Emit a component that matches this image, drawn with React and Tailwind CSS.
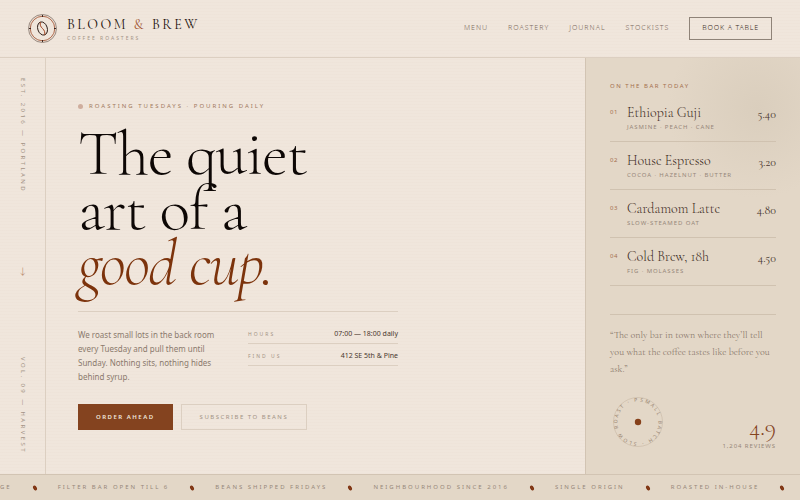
import { clsx } from 'clsx';

const links = ['Menu', 'Roastery', 'Journal', 'Stockists'];

const drinks = [
  { name: 'Ethiopia Guji', notes: 'Jasmine · Peach · Cane', price: '5.40' },
  { name: 'House Espresso', notes: 'Cocoa · Hazelnut · Butter', price: '3.20' },
  { name: 'Cardamom Latte', notes: 'Slow-steamed oat', price: '4.80' },
  { name: 'Cold Brew, 18h', notes: 'Fig · Molasses', price: '4.50' },
];

const details = [
  { label: 'Hours', value: '07:00 — 18:00 daily' },
  { label: 'Find us', value: '412 SE 5th & Pine' },
];

const ticker = [
  'Ge',
  'Filter bar open till 6',
  'Beans shipped Fridays',
  'Neighbourhood since 2016',
  'Single origin',
  'Roasted in-house',
];

const serif = "font-['Cormorant_Garamond','Liberation_Serif',serif]";

const Logo = () => (
  <svg viewBox="0 0 58 58" className="size-[29px] shrink-0" fill="none" aria-hidden="true">
    <circle cx="29" cy="29" r="28" stroke="#5c4a3f" strokeWidth="1.2" />
    <circle cx="29" cy="29" r="24.5" stroke="#a5593a" strokeWidth="1.8" />
    <path d="M29 2v4M29 52v4M2 29h4M52 29h4" stroke="#2a1a14" strokeWidth="1.8" />
    <g transform="rotate(-18 29 29)">
      <ellipse cx="29" cy="29" rx="9.5" ry="13.5" stroke="#2a1a14" strokeWidth="1.8" />
      <path d="M29 15.500c-3 5-2.500 9 0 13.500s3 9 0 13.500" stroke="#a0441f" strokeWidth="1.8" />
    </g>
  </svg>
);

const Bean = () => (
  <svg viewBox="0 0 12 12" className="size-1.5 shrink-0" aria-hidden="true">
    <g transform="rotate(-28 6 6)">
      <ellipse cx="6" cy="6" rx="3.6" ry="5.2" fill="#7c2f0c" />
      <path d="M6 1c-1.2 2.4-.8 3.4 0 5s1.2 2.6 0 5" stroke="#b07a5a" strokeWidth=".5" fill="none" />
    </g>
  </svg>
);

const Stamp = () => (
  <svg viewBox="2 2 56 56" className="size-14 shrink-0" aria-hidden="true">
    <defs>
      <path id="stamp-ring" d="M30 9.5a20.5 20.5 0 1 1-.01 0" />
    </defs>
    <circle cx="30" cy="30" r="24.5" fill="none" stroke="#cbbca9" strokeWidth=".7" />
    <text className="fill-[#97836f] font-['Noto_Sans',sans-serif] text-[5px] tracking-[0.38em]">
      <textPath href="#stamp-ring" startOffset="2">SMALL BATCH · SLOW ROAST · P</textPath>
    </text>
    <circle cx="30" cy="30" r="3.2" fill="#86401a" />
  </svg>
);

export default function App() {
  return (
    <div className="flex min-h-screen flex-col overflow-hidden bg-[#f0e6dc] bg-[repeating-linear-gradient(0deg,transparent_0_2px,#7c330c03_2px_3px)] font-['Noto_Sans',sans-serif] text-[#2a1a14]">
      {/* Header */}
      <header className="flex h-[58px] items-center justify-between border-b border-[#dccfc1] px-7">
        <a href="#home" className="flex items-center gap-2.5">
          <Logo />
          <span className="flex flex-col">
            <span className={clsx(serif, 'text-[14px] leading-4 font-normal tracking-[0.18em] text-[#1a0f0a]')}>
              BLOOM <span className="text-[#a0522d]">&amp;</span> BREW
            </span>
            <span className="mt-0.5 text-[5px] leading-[6px] tracking-[0.4em] text-[#a39385]">COFFEE ROASTERS</span>
          </span>
        </a>
        <nav className="flex items-center gap-5 text-[7px] font-light tracking-[1px] uppercase text-[#7d6b5e]">
          {links.map((link) => (
            <a key={link} href={`#${link.toLowerCase()}`}>{link}</a>
          ))}
          <button type="button" className="h-[23px] border border-[#8f8378] px-3 font-light uppercase tracking-[0.12em] text-[#3b2a22]">
            Book a table
          </button>
        </nav>
      </header>

      <main className="grid flex-1 grid-cols-[46px_1fr_215px]">
        {/* Side rail */}
        <aside className="flex flex-col items-center justify-between border-r border-[#dccfc1] py-5 text-[6px] tracking-[0.4em] text-[#a39385]">
          <span className="[writing-mode:vertical-rl]">EST. 2016 — PORTLAND</span>
          <span className={clsx(serif, 'mb-2 text-[14px] leading-4 tracking-normal text-[#b98d72]')}>↓</span>
          <span className="[writing-mode:vertical-rl]">VOL. 09 — HARVEST</span>
        </aside>

        {/* Hero */}
        <section className="flex flex-col justify-center px-8">
          <p className="flex items-center gap-1.5 text-[6px] leading-2 tracking-[2px] text-[#a27a60]">
            <span className="size-[5px] rounded-full bg-[#cfae9e]" />
            ROASTING TUESDAYS · POURING DAILY
          </p>
          <h1 className={clsx(serif, 'mt-4 text-[64px] leading-[55px] font-light tracking-[-0.02em] text-[#0d0705]')}>
            The quiet
            <br />
            art of a
            <br />
            <em className="text-[#7c330c]">good cup.</em>
          </h1>

          <div className="mt-5 grid w-80 grid-cols-[140px_150px] justify-between border-t border-[#dccfc1] pt-4">
            <p className="text-[8px] leading-[14px] text-[#8b7a6d]">
              We roast small lots in the back room every Tuesday and pull them until Sunday. Nothing sits, nothing hides behind syrup.
            </p>
            <dl className="flex flex-col gap-1.5">
              {details.map(({ label, value }) => (
                <div key={label} className="flex h-4 justify-between border-b border-[#dccfc1] leading-3">
                  <dt className="text-[5px] tracking-[0.4em] uppercase text-[#a39385]">{label}</dt>
                  <dd className="text-[7px] text-[#4a382e]">{value}</dd>
                </div>
              ))}
            </dl>
          </div>

          <div className="mt-5 flex gap-2 text-[6px]">
            <button type="button" className="h-[26px] bg-[#84431f] px-[18px] font-semibold tracking-[0.25em] text-[#f0e6dc]">
              ORDER AHEAD
            </button>
            <button type="button" className="h-[26px] border border-[#dccfc1] px-[18px] tracking-[0.25em] text-[#a39385]">
              SUBSCRIBE TO BEANS
            </button>
          </div>
        </section>

        {/* Bar menu */}
        <aside className="flex flex-col border-l border-[#d2c4b3] bg-[#e3d7c7] bg-[radial-gradient(circle_at_80%_12%,#dacebd_0,#e3d7c7_90px)] px-6 py-6">
          <h2 className="text-[6px] leading-2 tracking-[0.25em] text-[#a3704f]">ON THE BAR TODAY</h2>
          <ol className="mt-1">
            {drinks.map(({ name, notes, price }, i) => (
              <li key={name} className="flex h-12 border-b border-[#d0c2b0] pt-2.5">
                <span className="w-[17px] text-[6px] leading-4 tracking-[0.1em] text-[#a3704f]">0{i + 1}</span>
                <div className="flex-1">
                  <h3 className={clsx(serif, 'text-[14px] leading-[18px] font-light text-[#3b2a22]')}>{name}</h3>
                  <p className="text-[6px] leading-[10px] tracking-[0.15em] uppercase text-[#97877a]">{notes}</p>
                </div>
                <span className={clsx(serif, 'text-[12px] leading-5 text-[#4a382e]')}>{price}</span>
              </li>
            ))}
          </ol>

          <blockquote className={clsx(serif, 'mt-7 border-t border-[#d0c2b0] pt-3 text-[10px] leading-[17px] text-[#8b7a6d]')}>
            “The only bar in town where they’ll tell you what the coffee tastes like before you ask.”
          </blockquote>
          <div className="mt-auto flex items-end justify-between">
            <Stamp />
            <div className="text-right">
              <p className={clsx(serif, 'text-[24px] leading-7 font-light text-[#84431f]')}>4.9</p>
              <p className="text-[6px] leading-2 tracking-[0.15em] text-[#97877a]">1,204 REVIEWS</p>
            </div>
          </div>
        </aside>
      </main>

      {/* Ticker */}
      <footer className="flex h-[26px] items-center overflow-hidden border-t border-[#d2c4b3] bg-[#e3d7c7]">
        <ul className="flex shrink-0 text-[6px] tracking-[2px] uppercase text-[#97877a]">
          {ticker.map((item) => (
            <li key={item} className="flex items-center whitespace-nowrap">
              <span>{item}</span>
              <span className="mx-5"><Bean /></span>
            </li>
          ))}
        </ul>
      </footer>
    </div>
  );
}
